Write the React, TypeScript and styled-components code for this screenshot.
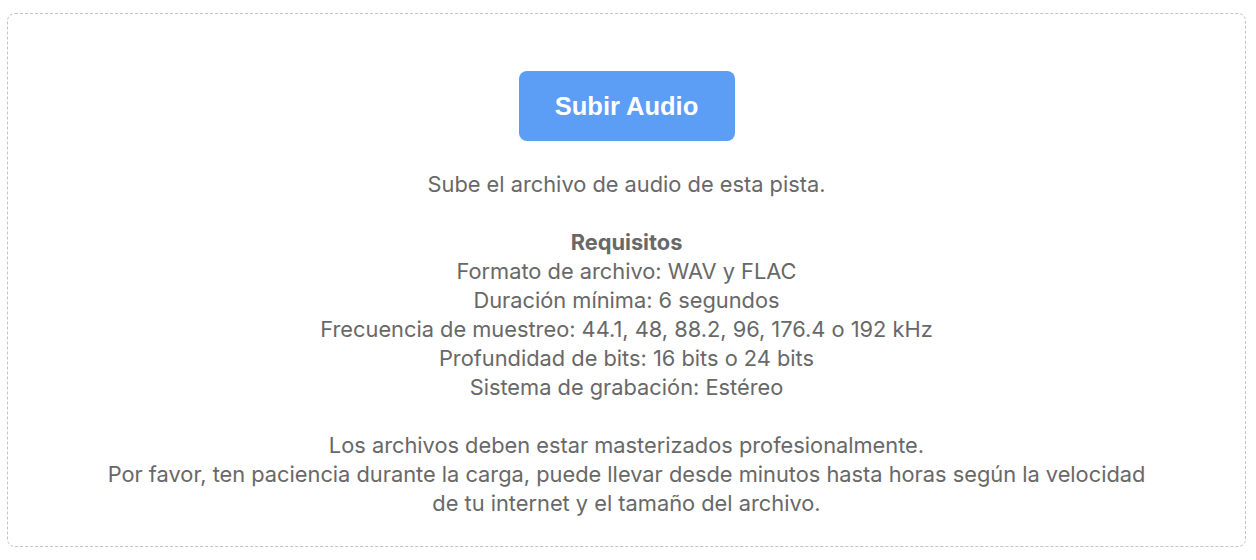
import * as React from 'react';
import styled, { createGlobalStyle } from 'styled-components';

const GlobalStyle = createGlobalStyle`
  html, body {
    margin: 0;
    padding: 0;
    background: #ffffff;
  }

  body {
    font-family: Inter, "Noto Sans", sans-serif;
  }
`;

const requirements = [
  'Formato de archivo: WAV y FLAC',
  'Duración mínima: 6 segundos',
  'Frecuencia de muestreo: 44.1, 48, 88.2, 96, 176.4 o 192 kHz',
  'Profundidad de bits: 16 bits o 24 bits',
  'Sistema de grabación: Estéreo',
];

const App: React.FC = () => (
  <>
    <GlobalStyle />
    <Page>
      <UploadBox>
        <UploadButton type="button">Subir Audio</UploadButton>
        <Info>
          Sube el archivo de audio de esta pista.
          <br />
          <br />
          <strong>Requisitos</strong>
          {requirements.map((item) => (
            <React.Fragment key={item}>
              <br />
              {item}
            </React.Fragment>
          ))}
          <br />
          <br />
          Los archivos deben estar masterizados profesionalmente.
          <br />
          Por favor, ten paciencia durante la carga, puede llevar desde minutos hasta horas según la velocidad
          <br />
          de tu internet y el tamaño del archivo.
        </Info>
      </UploadBox>
    </Page>
  </>
);

export default App;

const Page = styled.div`
  padding: 13px 10px 12px 7px;
`;

const UploadBox = styled.div`
  display: flex;
  flex-direction: column;
  align-items: center;
  height: 534px;
  box-sizing: border-box;
  padding-top: 57px;
  border: 1px dashed #c4c4c4;
  border-radius: 8px;
`;

const UploadButton = styled.button`
  width: 216px;
  height: 70px;
  border: none;
  border-radius: 8px;
  background: #5c9ef5;
  color: #ffffff;
  font-family: "Liberation Sans", Arial, sans-serif;
  font-size: 25.5px;
  font-weight: 700;
  cursor: pointer;
`;

const Info = styled.p`
  margin: 29px 0 0;
  color: #686868;
  font-size: 21.8px;
  line-height: 29px;
  text-align: center;

  strong {
    font-weight: 700;
  }
`;
